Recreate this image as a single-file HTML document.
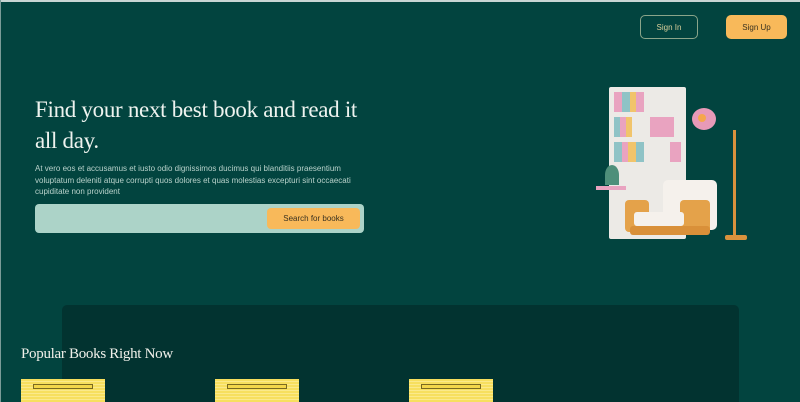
<!DOCTYPE html>
<html><head><meta charset="utf-8"><style>
*{margin:0;padding:0;box-sizing:border-box}
html,body{width:800px;height:402px;overflow:hidden}
body{background:#02443f;position:relative;font-family:"Liberation Sans",sans-serif}
.a{position:absolute}
h1{position:absolute;left:35px;top:94px;width:325px;font-family:"Liberation Serif",serif;font-weight:normal;font-size:23px;letter-spacing:-0.3px;line-height:31px;color:#eef3ef}
p.d{position:absolute;left:35px;top:163px;width:330px;font-size:8px;line-height:11.5px;color:#b9d2cb}
.btn{position:absolute;font-size:8px;display:flex;align-items:center;justify-content:center;border-radius:5px}
.book{position:absolute;top:379px;width:84px;height:23px;background:repeating-linear-gradient(#f7df5e 0 2px,#fbe98a 2px 3px)}
.book i{position:absolute;left:12px;top:5px;width:60px;height:5px;background:#f3d64a;border:1px solid #7a6a20;font-size:3px}
</style></head><body>
<div class="a" style="left:0;top:0;width:800px;height:2px;background:#c8d6d4"></div>
<div class="a" style="left:0;top:0;width:1px;height:402px;background:#7a9c98"></div>
<div class="btn" style="left:640px;top:15px;width:58px;height:24px;border:1px solid #8aa58a;color:#d9cf9a">Sign In</div>
<div class="btn" style="left:726px;top:15px;width:61px;height:24px;background:#f8b95a;color:#3a3220">Sign Up</div>
<h1>Find your next best book and read it all day.</h1>
<p class="d">At vero eos et accusamus et iusto odio dignissimos ducimus qui blanditiis praesentium voluptatum deleniti atque corrupti quos dolores et quas molestias excepturi sint occaecati cupiditate non provident</p>
<div class="a" style="left:35px;top:204px;width:329px;height:29px;background:#acd3c8;border-radius:4px"></div>
<div class="btn" style="left:267px;top:208px;width:93px;height:21px;background:#f8b95a;color:#3a3220;border-radius:4px">Search for books</div>
<div class="a" style="left:609px;top:87px;width:77px;height:152px;background:#eceae6;border-radius:2px"></div>
<div class="a" style="left:614px;top:92px;width:67px;height:20px;background:linear-gradient(90deg,#e9a3c0 0 8px,#8fc3c6 8px 16px,#f1c46b 16px 22px,#e9a3c0 22px 30px,#eceae6 30px)"></div>
<div class="a" style="left:614px;top:117px;width:67px;height:20px;background:linear-gradient(90deg,#8fc3c6 0 6px,#e9a3c0 6px 12px,#f1c46b 12px 18px,#eceae6 18px 36px,#e9a3c0 36px 60px,#eceae6 60px)"></div>
<div class="a" style="left:614px;top:142px;width:67px;height:20px;background:linear-gradient(90deg,#8fc3c6 0 8px,#e9a3c0 8px 14px,#f1c46b 14px 22px,#8fc3c6 22px 30px,#eceae6 30px 56px,#e9a3c0 56px)"></div>
<div class="a" style="left:596px;top:186px;width:30px;height:4px;background:#e9a3c0"></div>
<div class="a" style="left:605px;top:165px;width:14px;height:20px;background:#4e8f7a;border-radius:50% 50% 0 0"></div>
<div class="a" style="left:733px;top:130px;width:3px;height:106px;background:#d9923d"></div>
<div class="a" style="left:725px;top:235px;width:22px;height:5px;background:#d9923d;border-radius:2px"></div>
<div class="a" style="left:692px;top:108px;width:24px;height:22px;background:#e79ab8;border-radius:50%"></div>
<div class="a" style="left:698px;top:114px;width:8px;height:8px;background:#f6a64c;border-radius:50%"></div>
<div class="a" style="left:663px;top:180px;width:54px;height:50px;background:#f5f1ec;border-radius:5px"></div>
<div class="a" style="left:625px;top:200px;width:24px;height:32px;background:#e4a24a;border-radius:4px"></div>
<div class="a" style="left:680px;top:200px;width:30px;height:32px;background:#e4a24a;border-radius:4px"></div>
<div class="a" style="left:634px;top:212px;width:50px;height:14px;background:#f5f1ec;border-radius:3px"></div>
<div class="a" style="left:630px;top:226px;width:80px;height:9px;background:#d99039;border-radius:3px"></div>
<div class="a" style="left:62px;top:305px;width:677px;height:100px;background:#023330;border-radius:5px 5px 0 0"></div>
<div class="a" style="left:21px;top:346px;font-family:'Liberation Serif',serif;font-size:15px;letter-spacing:-0.3px;color:#f0f0ea">Popular Books Right Now</div>
<div class="book" style="left:21px"><i></i></div>
<div class="book" style="left:215px"><i></i></div>
<div class="book" style="left:409px"><i></i></div>
</body></html>
